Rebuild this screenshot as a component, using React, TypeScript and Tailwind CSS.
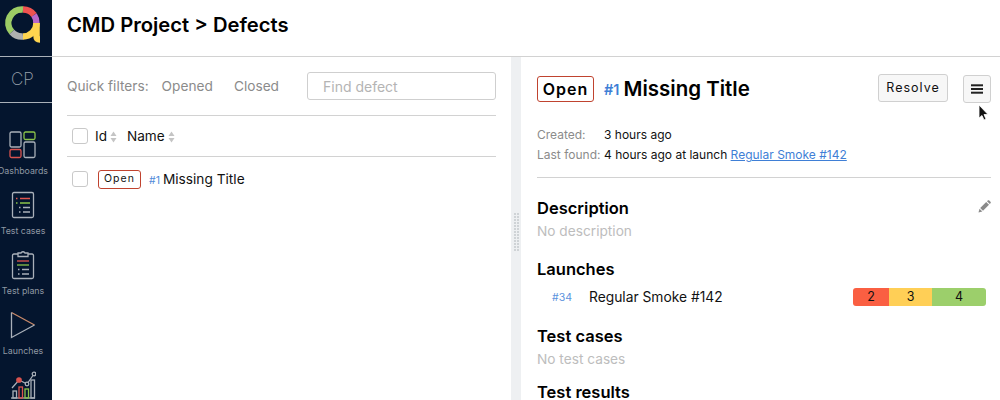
function Sort() {
    return (
        <svg width="7" height="12" viewBox="0 0 7 12" className="ml-[3px] mt-[1px] fill-[#c4c4c4]">
            <path d="M3.5 0.5 L6.5 5 H0.5 Z" />
            <path d="M3.5 11.5 L6.5 7 H0.5 Z" />
        </svg>
    );
}

function Checkbox() {
    return <div className="h-4 w-4 shrink-0 rounded-[3px] border border-[#c9c9c9] bg-white" />;
}

function NavItem({ label, children }: { label: string; children: React.ReactNode }) {
    return (
        <div className="flex h-[60px] w-[46px] shrink-0 flex-col items-center">
            <div className="flex h-[32px] items-center justify-center">{children}</div>
            <span className="mt-[4px] whitespace-nowrap text-[8.8px] leading-[12px] text-[#8f98a3]">{label}</span>
        </div>
    );
}

function Logo() {
    return (
        <svg width="40" height="40" viewBox="0 0 40 40" fill="none" strokeWidth="6.5">
            <path d="M9.8 29 A13.5 13.5 0 0 1 21 6.5" stroke="#9ccc65" />
            <path d="M21 6.5 A13.5 13.5 0 0 1 32 12" stroke="#ef5350" />
            <path d="M32 12 A13.5 13.5 0 0 1 34.4 20" stroke="#ba68c8" />
            <path d="M9.8 29 A13.5 13.5 0 0 0 21 33.5" stroke="#b0b0b0" />
            <path d="M21 33.5 A13.5 13.5 0 0 0 34.5 20" stroke="#ffd54f" />
            <path d="M34.5 20 V33 Q34.5 36.5 38 36.5" stroke="#ffd54f" />
        </svg>
    );
}

function Sidebar() {
    return (
        <aside className="flex h-full w-[52px] shrink-0 flex-col overflow-hidden bg-[#04152e]">
            <div className="flex h-[56px] w-[43px] shrink-0 items-start justify-center pt-[3px]">
                <Logo />
            </div>
            <div className="flex h-[47px] shrink-0 items-center border-y border-[#aab1b9] pl-[11px] text-[17px] font-extralight text-[#99a1ab]">
                CP
            </div>
            <div className="flex flex-col pt-[26px]">
                <NavItem label="Dashboards">
                    <svg width="28" height="28" viewBox="0 0 28 28" fill="none" strokeWidth="1.3">
                        <rect x="1" y="1" width="11" height="15" rx="1.5" stroke="#a9b0b9" />
                        <rect x="15" y="1" width="11" height="7.5" rx="1.5" stroke="#8bc34a" />
                        <rect x="1" y="18.5" width="11" height="8" rx="1.5" stroke="#d9534f" />
                        <rect x="15" y="11" width="11" height="15.5" rx="1.5" stroke="#a9b0b9" />
                    </svg>
                </NavItem>
                <NavItem label="Test cases">
                    <svg width="24" height="28" viewBox="0 0 24 28" fill="none" strokeWidth="1.3">
                        <rect x="1.5" y="1.5" width="21" height="25" rx="1.5" stroke="#a9b0b9" />
                        <path d="M5 7.5 H6.5 M9 7.5 H19" stroke="#e0564f" />
                        <path d="M5 12 H6.5 M9 12 H19" stroke="#8bc34a" />
                        <path d="M8 16.5 H9.5 M12 16.5 H19 M8 21 H9.5 M12 21 H19" stroke="#a9b0b9" />
                    </svg>
                </NavItem>
                <NavItem label="Test plans">
                    <svg width="24" height="30" viewBox="0 0 24 30" fill="none" strokeWidth="1.3">
                        <path d="M7 4 H3 Q1.5 4 1.5 5.5 V27 Q1.5 28.5 3 28.5 H21 Q22.5 28.5 22.5 27 V5.5 Q22.5 4 21 4 H17" stroke="#a9b0b9" />
                        <path d="M7 6.5 V3 H10 Q12 0.5 14 3 H17 V6.5 Z" stroke="#a9b0b9" />
                        <path d="M6 11 H18" stroke="#e0564f" />
                        <path d="M6 15 H18" stroke="#8bc34a" />
                        <path d="M7 19.5 H8.5 M11 19.5 H18 M7 24 H8.5 M11 24 H18" stroke="#a9b0b9" />
                    </svg>
                </NavItem>
                <NavItem label="Launches">
                    <svg width="26" height="28" viewBox="0 0 26 28" fill="none" strokeWidth="1.3">
                        <path d="M1.5 1.5 L24.5 14" stroke="#c98a6a" />
                        <path d="M1.5 1.5 V26.5 L24.5 14" stroke="#a9b0b9" />
                    </svg>
                </NavItem>
                <NavItem label="">
                    <svg width="26" height="28" viewBox="0 0 26 28" fill="none" strokeWidth="1.3">
                        <path d="M2 17 L9 9 L17 13 L24 3" stroke="#a9b0b9" />
                        <circle cx="9" cy="9" r="2.2" fill="#d9534f" stroke="#d9534f" />
                        <circle cx="17" cy="13" r="1.8" stroke="#a9b0b9" fill="#04152e" />
                        <circle cx="24" cy="3" r="1.8" stroke="#a9b0b9" fill="#04152e" />
                        <path d="M1 27 H25" stroke="#a9b0b9" />
                        <rect x="3" y="20" width="3.5" height="7" stroke="#a9b0b9" />
                        <rect x="9" y="16" width="3.5" height="11" stroke="#d9534f" />
                        <rect x="15" y="18" width="3.5" height="9" stroke="#8bc34a" />
                        <rect x="21" y="9" width="3.5" height="18" stroke="#a9b0b9" />
                    </svg>
                </NavItem>
            </div>
        </aside>
    );
}

function DefectList() {
    return (
        <section className="w-[459px] shrink-0 pl-[15px] pr-[15px]">
            <div className="flex h-[59px] items-center border-b border-[#d2d2d2] text-[13.7px] text-[#8b8b8b]">
                <span className="whitespace-nowrap">Quick filters:</span>
                <span className="ml-[13px]">Opened</span>
                <span className="ml-[21px]">Closed</span>
                <input
                    placeholder="Find defect"
                    className="ml-auto h-[28px] w-[189px] rounded-[3px] border border-[#cfcfcf] bg-white px-[15px] text-[14px] placeholder:text-[#b4b4b4]"
                />
            </div>
            <div className="flex h-[41px] items-center border-b border-[#d2d2d2] pl-[5px] text-[13.6px] text-[#111]">
                <Checkbox />
                <span className="ml-[7px]">Id</span>
                <Sort />
                <span className="ml-[10px]">Name</span>
                <Sort />
            </div>
            <div className="flex h-[44px] items-center pl-[5px]">
                <Checkbox />
                <span className="ml-[10px] flex h-[19px] w-[43px] items-center justify-center rounded-[3px] border border-[#c0432f] text-[10.5px] tracking-[1.1px] text-[#111]">
                    Open
                </span>
                <span className="ml-[8px] mt-[4px] text-[10.5px] text-[#4f8ad9]">#1</span>
                <span className="ml-[3px] text-[13.7px] leading-[20px] text-[#111]">Missing Title</span>
            </div>
        </section>
    );
}

function Splitter() {
    return (
        <div className="flex w-[10px] shrink-0 items-center justify-center bg-[#eef0f2] pt-[6px]">
            <div className="grid grid-cols-2 gap-[1px]">
                {Array.from({ length: 26 }).map((_, i) => (
                    <span key={i} className="h-[2px] w-[2px] bg-[#cfd3d6]" />
                ))}
            </div>
        </div>
    );
}

function SectionTitle({ children }: { children: React.ReactNode }) {
    return <h2 className="text-[16.5px] font-semibold leading-[20px] text-black">{children}</h2>;
}

function Details() {
    return (
        <section className="min-w-0 flex-1 overflow-hidden pl-[16px] pr-[9px]">
            <div className="flex h-[60px] items-center pt-[4px]">
                <span className="flex h-[26px] w-[57px] items-center justify-center rounded-[3px] border border-[#c0432f] text-[16px] font-semibold tracking-[1px] text-black">
                    Open
                </span>
                <span className="ml-[10px] mt-[2px] text-[14.5px] font-semibold text-[#3f7fd6]">#1</span>
                <span className="ml-[4px] text-[20.5px] font-semibold text-black">Missing Title</span>
                <button className="ml-auto mt-[-2px] h-[28px] w-[70px] rounded-[3px] border border-[#d0d0d0] bg-[#f7f7f7] text-[12.5px] tracking-[1px] text-[#111]">
                    Resolve
                </button>
                <button className="ml-[15px] flex h-[28px] w-[28px] items-center justify-center rounded-[3px] border border-[#d0d0d0] bg-[#f7f7f7]">
                    <svg width="12" height="10" viewBox="0 0 12 10" className="fill-[#222]">
                        <rect width="12" height="2" y="0.3" />
                        <rect width="12" height="2" y="4" />
                        <rect width="12" height="2" y="7.7" />
                    </svg>
                </button>
            </div>
            <div className="mt-[9px] flex flex-col gap-[2px] border-b border-[#d2d2d2] pb-[13px] text-[12px] leading-[18px] text-[#111]">
                <div className="flex">
                    <span className="w-[67px] text-[#8b8b8b]">Created:</span>
                    <span>3 hours ago</span>
                </div>
                <div className="flex">
                    <span className="w-[67px] text-[#8b8b8b]">Last found:</span>
                    <span>
                        4 hours ago at launch <span className="text-[#3f7fd6] underline">Regular Smoke #142</span>
                    </span>
                </div>
            </div>
            <div className="mt-[20px] flex items-center justify-between">
                <SectionTitle>Description</SectionTitle>
                <svg width="13" height="13" viewBox="0 0 13 13" className="mt-[-4px] fill-[#8a8a8a]">
                    <path d="M0.5 12.5 L1.5 8.7 L4.3 11.5 Z" />
                    <path d="M2.2 8 L8.2 2 L11 4.8 L5 10.8 Z" />
                    <path d="M9 1.2 L10 0.3 Q10.5 0 11 0.3 L12.7 2 Q13 2.5 12.7 3 L11.8 4 Z" />
                </svg>
            </div>
            <p className="mt-[3px] text-[13.7px] leading-[20px] text-[#bdbdbd]">No description</p>
            <div className="mt-[18px]">
                <SectionTitle>Launches</SectionTitle>
            </div>
            <div className="mt-[9px] flex h-[18px] items-center">
                <span className="ml-[15px] mt-[1px] w-[37px] text-[10.5px] text-[#5b93dd]">#34</span>
                <span className="mt-[1px] text-[13.8px] text-[#111]">Regular Smoke #142</span>
                <div className="ml-auto mr-[5px] flex h-[18px] w-[133px] overflow-hidden rounded-[3px] text-center text-[12.5px] leading-[18px] text-[#111]">
                    <span className="w-[36px] bg-[#fa5f42]">2</span>
                    <span className="w-[43px] bg-[#ffcf56]">3</span>
                    <span className="w-[54px] bg-[#9ccf6b]">4</span>
                </div>
            </div>
            <div className="mt-[20px]">
                <SectionTitle>Test cases</SectionTitle>
            </div>
            <p className="mt-[3px] text-[13.7px] leading-[20px] text-[#bdbdbd]">No test cases</p>
            <div className="mt-[13px]">
                <SectionTitle>Test results</SectionTitle>
            </div>
        </section>
    );
}

export default function App() {
    return (
        <div className="relative flex h-[400px] w-[1000px] overflow-hidden bg-white font-['Inter',sans-serif]">
            <Sidebar />
            <div className="flex min-w-0 flex-1 flex-col">
                <header className="flex h-[57px] shrink-0 items-center border-b border-[#d2d2d2] pb-[6px] pl-[15px] text-[20.2px] font-semibold text-black">
                    CMD Project &gt; Defects
                </header>
                <main className="flex min-h-0 flex-1">
                    <DefectList />
                    <Splitter />
                    <Details />
                </main>
            </div>
            <svg width="12" height="18" viewBox="0 0 12 18" className="absolute left-[978px] top-[104px]">
                <path d="M1 1 V14 L4 11.5 L6 16 L8 15 L6 10.5 H10 Z" fill="#111" stroke="#fff" strokeWidth="0.8" />
            </svg>
        </div>
    );
}
